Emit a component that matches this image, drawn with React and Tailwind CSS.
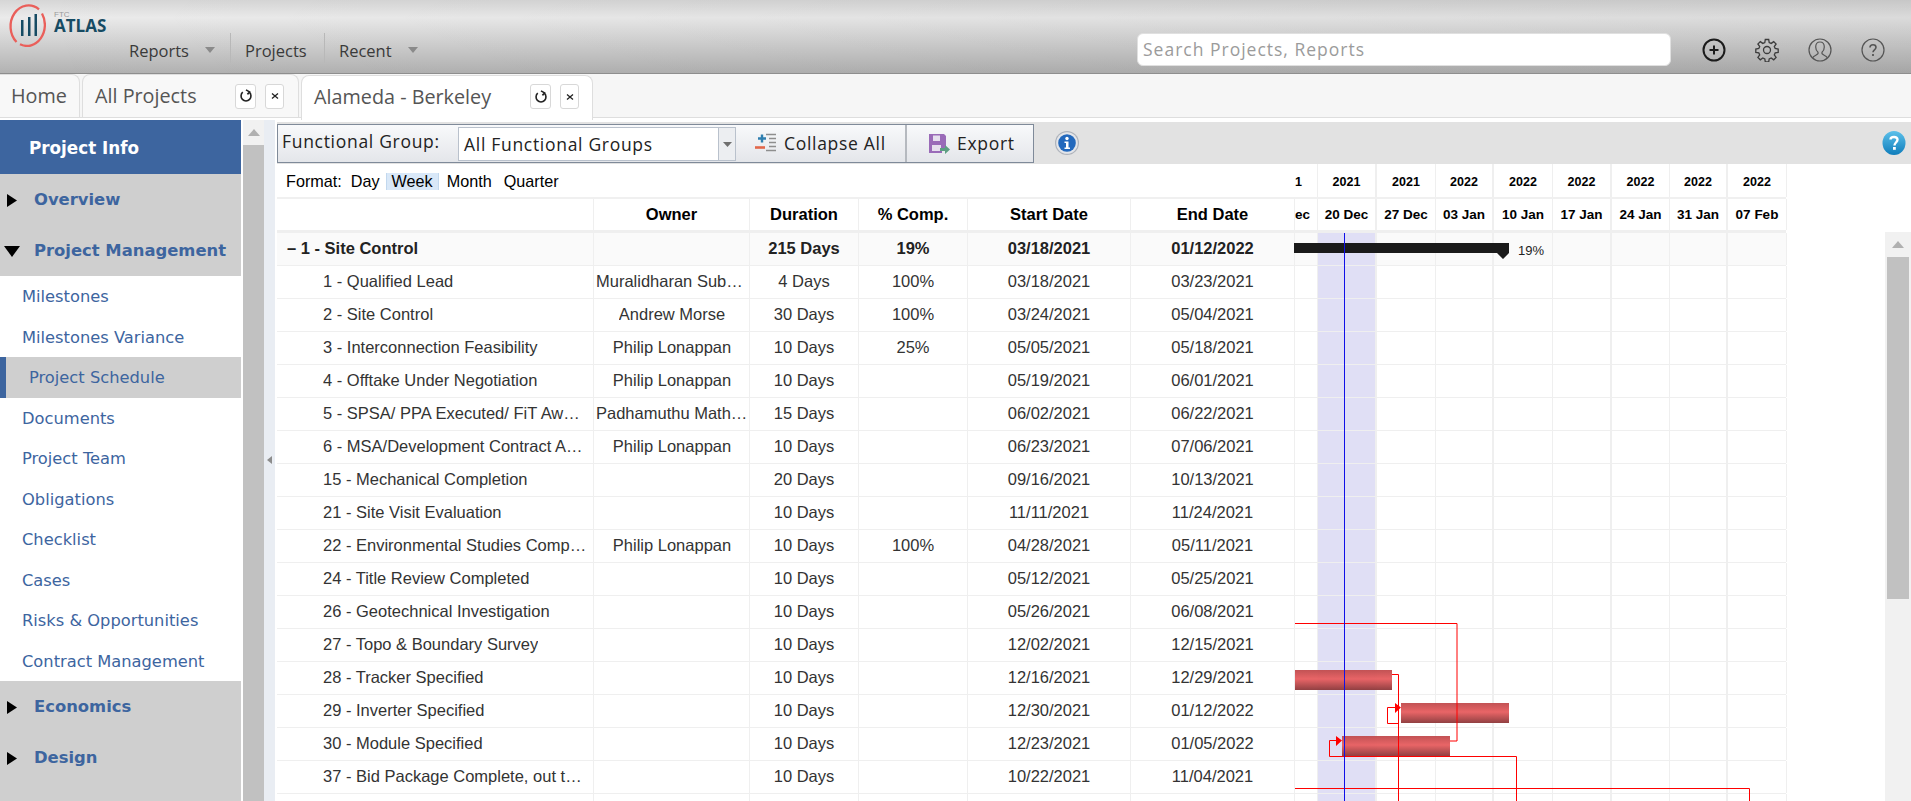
import React from 'react';

const SANS = "font-['Open_Sans','Noto_Sans',sans-serif]";

const links = ['Milestones', 'Milestones Variance', 'Project Schedule', 'Documents', 'Project Team', 'Obligations', 'Checklist', 'Cases', 'Risks & Opportunities', 'Contract Management'];

const rows = [
  ['1 - Qualified Lead', 'Muralidharan Subramanian', '4 Days', '100%', '03/18/2021', '03/23/2021'],
  ['2 - Site Control', 'Andrew Morse', '30 Days', '100%', '03/24/2021', '05/04/2021'],
  ['3 - Interconnection Feasibility', 'Philip Lonappan', '10 Days', '25%', '05/05/2021', '05/18/2021'],
  ['4 - Offtake Under Negotiation', 'Philip Lonappan', '10 Days', '', '05/19/2021', '06/01/2021'],
  ['5 - SPSA/ PPA Executed/ FiT Awarded', 'Padhamuthu Mathivanan', '15 Days', '', '06/02/2021', '06/22/2021'],
  ['6 - MSA/Development Contract Approved', 'Philip Lonappan', '10 Days', '', '06/23/2021', '07/06/2021'],
  ['15 - Mechanical Completion', '', '20 Days', '', '09/16/2021', '10/13/2021'],
  ['21 - Site Visit Evaluation', '', '10 Days', '', '11/11/2021', '11/24/2021'],
  ['22 - Environmental Studies Completed', 'Philip Lonappan', '10 Days', '100%', '04/28/2021', '05/11/2021'],
  ['24 - Title Review Completed', '', '10 Days', '', '05/12/2021', '05/25/2021'],
  ['26 - Geotechnical Investigation', '', '10 Days', '', '05/26/2021', '06/08/2021'],
  ['27 - Topo & Boundary Survey', '', '10 Days', '', '12/02/2021', '12/15/2021'],
  ['28 - Tracker Specified', '', '10 Days', '', '12/16/2021', '12/29/2021'],
  ['29 - Inverter Specified', '', '10 Days', '', '12/30/2021', '01/12/2022'],
  ['30 - Module Specified', '', '10 Days', '', '12/23/2021', '01/05/2022'],
  ['37 - Bid Package Complete, out to bid', '', '10 Days', '', '10/22/2021', '11/04/2021'],
  ['', '', '', '', '', ''],
];

const years = ['1', '2021', '2021', '2022', '2022', '2022', '2022', '2022', '2022'];
const weeks = ['ec', '20 Dec', '27 Dec', '03 Jan', '10 Jan', '17 Jan', '24 Jan', '31 Jan', '07 Feb'];
// thick separators every second week, the current week is shaded
const weekLines = ['border-r', 'border-r-2', 'border-r', 'border-r-2', 'border-r', 'border-r-2', 'border-r', 'border-r-2', 'border-r'];

const GRID = 'grid grid-cols-[317px_156px_109px_109px_163px_164px_23px_59px_59px_58px_59px_59px_58px_58px_59px] w-[1509px]';

const Caret = ({ className }) => (
  <svg width="10" height="6" viewBox="0 0 10 6" className={className}>
    <path d="M0 0h10L5 6z" fill="#8a8a8a" />
  </svg>
);

const Logo = () => (
  <div className="flex items-start w-[129px] h-[73px] pl-[8px] pt-[3px] shrink-0">
    <svg width="38" height="44" viewBox="0 0 38 44" className="shrink-0">
      <path d="M34 10.500A18 21 0 0 1 12 41.300" fill="none" stroke="#ea5f5a" strokeWidth="2.300" />
      <path d="M8.500 39A18 21 0 0 1 31 6.300" fill="none" stroke="#ea5f5a" strokeWidth="2.300" />
      <path d="M13 17v16h2.500V17zM20 14v19h2.500V14zM26.500 11v22H29V11z" fill="#164b63" />
    </svg>
    <div className="ml-[8px] mt-[8px] flex flex-col">
      <span className="font-['Liberation_Sans',sans-serif] text-[8px] leading-[7px] text-[#9a9a9a]">FTC</span>
      <span className="font-['Open_Sans',sans-serif] font-bold text-[17px] leading-[16px] text-[#164b63]">ATLAS</span>
    </div>
  </div>
);

const NavItem = ({ label, caret, className }) => (
  <div className={`flex items-center h-[30px] pt-[7px] text-[#3a3a3a] text-[16.500px] ${className}`}>
    <span>{label}</span>
    {caret && <Caret className="ml-[16px] mb-[3px]" />}
  </div>
);

const HeaderIcons = () => (
  <div className="flex items-center gap-[29px] ml-[31px]">
    <svg width="24" height="24" viewBox="0 0 24 24" fill="none" stroke="#1c1c1c" strokeWidth="2">
      <circle cx="12" cy="12" r="10.500" />
      <path d="M12 7.500v9M7.500 12h9" />
    </svg>
    <svg width="24" height="24" viewBox="0 0 24 24" fill="none" stroke="#3c3c3c" strokeWidth="1.300">
      <circle cx="12" cy="12" r="3.500" />
      <path d="M10.300 1.500h3.400l.5 3 2 .9 2.500-1.800 2.400 2.400-1.800 2.500.9 2 3 .5v3.400l-3 .5-.9 2 1.800 2.500-2.400 2.400-2.500-1.800-2 .9-.5 3h-3.400l-.5-3-2-.9-2.500 1.800-2.400-2.400 1.800-2.500-.9-2-3-.5v-3.400l3-.5.9-2-1.800-2.500 2.400-2.400 2.500 1.800 2-.9z" />
    </svg>
    <svg width="24" height="24" viewBox="0 0 24 24" fill="none" stroke="#555" strokeWidth="1.200">
      <circle cx="12" cy="12" r="11" />
      <path d="M4.500 20c1-2.500 4.500-2.800 5.500-4.300v-1.500c-1.500-1.200-2.300-3-2.300-5.200 0-3 1.800-5 4.300-5s4.300 2 4.300 5c0 2.200-.8 4-2.300 5.200v1.500c1 1.500 4.500 1.800 5.500 4.300" />
    </svg>
    <svg width="24" height="24" viewBox="0 0 24 24" fill="none" stroke="#555" strokeWidth="1.200">
      <circle cx="12" cy="12" r="11" />
      <path d="M9 9.500c0-1.800 1.300-2.800 3-2.800s3 1 3 2.600c0 2.500-3 2.500-3 5" strokeWidth="1.600" />
      <path d="M12 16v2" strokeWidth="1.800" />
    </svg>
  </div>
);

const Header = () => (
  <header className={`flex h-[74px] border-b border-[#8e8e8e] bg-[linear-gradient(90deg,rgba(0,0,0,0),rgba(0,0,0,0.07)),linear-gradient(180deg,#d6d6d6,#ebebeb_24%,#b2b2b2)] ${SANS}`}>
    <Logo />
    <nav className="flex self-start mt-[33px] h-[30px]">
      <NavItem label="Reports" caret className="w-[102px] border-r border-[#b8b8b8]" />
      <NavItem label="Projects" className="w-[94px] pl-[14px] border-r border-[#b8b8b8]" />
      <NavItem label="Recent" caret className="pl-[14px]" />
    </nav>
    <div className="flex items-center self-start ml-auto mr-[26px] mt-[33px]">
      <div className="w-[534px] h-[33px] rounded-[6px] bg-white border border-[#e0e0e0] flex items-center pl-[5px] text-[#9b9b9b] text-[17.500px] tracking-[1px]">
        Search Projects, Reports
      </div>
      <HeaderIcons />
    </div>
  </header>
);

const TabButton = ({ children, className }) => (
  <span className={`flex items-center justify-center h-[25px] rounded-[3px] border border-[#d8d8d8] bg-white text-[#222] ${className}`}>{children}</span>
);

const TabTools = () => (
  <div className="flex items-center gap-[9px] ml-auto">
    <TabButton className="w-[21px]">
      <svg width="14" height="14" viewBox="0 0 13 13" fill="none" stroke="#222" strokeWidth="1.500">
        <path d="M3.500 3A4.600 4.600 0 1 0 9.500 3" />
        <path d="M6.500 .8 9.800 2.700 7.800 5" />
      </svg>
    </TabButton>
    <TabButton className="w-[19px]">
      <svg width="8" height="8" viewBox="0 0 8 8" stroke="#222" strokeWidth="1.300"><path d="M1 1.500l6 5M7 1.500l-6 5" /></svg>
    </TabButton>
  </div>
);

const Tabs = () => (
  <div className={`flex items-end h-[44px] bg-[#f6f6f6] border-b border-[#dedede] text-[#555] text-[19.800px] ${SANS}`}>
    <div className="flex items-center w-[80px] h-[43px] pl-[11px] bg-[#f8f8f8] border border-l-0 border-b-0 border-[#dedede] rounded-tr-[8px]">Home</div>
    <div className="flex items-center w-[217px] h-[43px] ml-[2px] pl-[12px] pr-[14px] bg-[#f8f8f8] border border-b-0 border-[#dedede] rounded-t-[8px]">
      All Projects
      <TabTools />
    </div>
    <div className="relative flex items-center w-[292px] h-[45px] -mb-[3px] ml-[2px] pl-[12px] pr-[13px] pb-[3px] bg-white border border-b-0 border-[#dedede] rounded-t-[8px]">
      Alameda - Berkeley
      <TabTools />
    </div>
  </div>
);

const Tri = ({ down }) => (
  <span className="flex items-center justify-center w-[20px] shrink-0">
    {down ? (
      <svg width="16" height="11" viewBox="0 0 16 11"><path d="M0 0h16L8 11z" fill="#000" /></svg>
    ) : (
      <svg width="10" height="13" viewBox="0 0 10 13"><path d="M0 0l10 6.500L0 13z" fill="#000" /></svg>
    )}
  </span>
);

const SideHead = ({ label, down }) => (
  <div className="flex items-center h-[51px] pl-[2px] pt-[1px]">
    <Tri down={down} />
    <span className="ml-[12px] font-bold text-[16.400px] text-[#3d659f]">{label}</span>
  </div>
);

const Sidebar = () => (
  <aside className="w-[241px] shrink-0 bg-[#cfcfcf] font-['DejaVu_Sans',sans-serif]">
    <div className="flex items-center h-[54px] pl-[29px] pt-[4px] bg-[#3d659f] text-white font-bold text-[16.800px]">Project Info</div>
    <SideHead label="Overview" />
    <SideHead label="Project Management" down />
    <ul className="bg-white">
      {links.map((link) => (
        link === 'Project Schedule' ? (
          <li key={link} className="flex items-center h-[40.500px] pl-[23px] pt-[2px] bg-[#cfcfcf] border-l-[6px] border-[#3d659f] text-[16.300px] text-[#3d659f]">{link}</li>
        ) : (
          <li key={link} className="flex items-center h-[40.500px] pl-[22px] pt-[2px] text-[16.300px] text-[#3d659f]">{link}</li>
        )
      ))}
    </ul>
    <SideHead label="Economics" />
    <SideHead label="Design" />
  </aside>
);

const SideScroll = () => (
  <div className="flex flex-col w-[21px] ml-[2px] shrink-0 bg-[#f1f1f1]">
    <div className="flex items-center justify-center h-[25px]">
      <svg width="12" height="7" viewBox="0 0 12 7"><path d="M6 0l6 7H0z" fill="#b0b0b0" /></svg>
    </div>
    <div className="flex-1 bg-[#c1c1c1]" />
  </div>
);

const Splitter = () => (
  <div className="flex items-center justify-center w-[11px] shrink-0 bg-[#e9edf3] mr-[2px]">
    <svg width="5" height="8" viewBox="0 0 5 8" className="mt-[-1px]"><path d="M5 0v8L0 4z" fill="#8c8c8c" /></svg>
  </div>
);

const InfoIcon = () => (
  <svg width="24" height="24" viewBox="0 0 24 24">
    <circle cx="12" cy="12" r="12" fill="#aeb3bb" />
    <circle cx="12" cy="12" r="10.800" fill="#e4e6ea" />
    <circle cx="12" cy="12" r="8.800" fill="#2369bd" />
    <circle cx="12" cy="7.500" r="1.700" fill="#fff" />
    <path d="M9.500 10.500h4v6h1.500V18H9.500v-1.500H11V12H9.500z" fill="#fff" />
  </svg>
);

const HelpIcon = () => (
  <svg width="24" height="26" viewBox="0 0 24 26" className="mr-[5px]">
    <defs>
      <linearGradient id="helpFill" x1="0" y1="0" x2="0" y2="1">
        <stop offset="0" stopColor="#5cc0ea" />
        <stop offset="1" stopColor="#0f7dbb" />
      </linearGradient>
    </defs>
    <ellipse cx="12" cy="13" rx="11.500" ry="12" fill="url(#helpFill)" />
    <path d="M8.500 9.500c0-3 7-3.500 7 0 0 3-3 3-3 6" fill="none" stroke="#fff" strokeWidth="2.400" />
    <rect x="11" y="17" width="2.800" height="2.800" fill="#fff" />
  </svg>
);

const Toolbar = () => (
  <div className={`flex items-start h-[42px] mt-[2px] bg-[#e2e2e2] ${SANS}`}>
    <div className="flex items-start w-[757px] h-[39px] mt-[2px] border border-[#7f8a99] bg-[linear-gradient(180deg,#f8f9fb,#e4e6ea)] text-[#222] text-[17.500px] tracking-[0.7px]">
      <span className="flex items-center h-[33px] w-[180px] pl-[4px] shrink-0">Functional Group:</span>
      <div className="flex w-[278px] h-[34px] mt-[2px] border border-[#b9c1cc] bg-white shrink-0">
        <span className="flex items-center flex-1 pl-[5px]">All Functional Groups</span>
        <span className="flex items-center justify-center w-[17px] border-l border-[#b9c1cc] bg-[#eceef1]">
          <svg width="9" height="5" viewBox="0 0 9 5"><path d="M0 0h9L4.500 5z" fill="#6f6f6f" /></svg>
        </span>
      </div>
      <div className="flex items-center w-[171px] h-full pl-[18px] border-r-2 border-[#b5b9bf] shrink-0">
        <svg width="24" height="22" viewBox="0 0 24 22" className="shrink-0">
          <path d="M4 5.500h8M8 1.500v8" stroke="#2f7fb0" strokeWidth="2.400" />
          <path d="M1 14.500h10" stroke="#e2674a" strokeWidth="2.600" />
          <path d="M12 1.500h10M15 5.500h7M15 9.500h7M15 13.500h7M12 17.500h10" stroke="#8e8e8e" strokeWidth="1.300" />
        </svg>
        <span className="ml-[6px]">Collapse All</span>
      </div>
      <div className="flex items-center h-full pl-[21px]">
        <svg width="22" height="22" viewBox="0 0 22 22" className="shrink-0">
          <path d="M1 1h15l2 2v12h-4v5H1z" fill="#9a6bb8" />
          <rect x="5" y="2.500" width="7" height="5.500" fill="#e6e0ee" />
          <rect x="4" y="12" width="9" height="6" fill="#e6e0ee" />
          <path d="M12 15h5v-3l5 4.500-5 4.500v-3h-5z" fill="#5e9f83" />
        </svg>
        <span className="ml-[7px]">Export</span>
      </div>
    </div>
    <div className="ml-[21px] self-center"><InfoIcon /></div>
    <div className="ml-auto self-center"><HelpIcon /></div>
  </div>
);

const FormatBar = () => (
  <div className="col-span-6 flex items-center pl-[9px] pt-[1px] text-[16.200px] text-black">
    <span>Format:</span>
    <span className="ml-[9px]">Day</span>
    <span className="ml-[6px] px-[5px] h-[17px] leading-[17px] bg-[#d9e8f8] border-x border-[#c2d8ee]">Week</span>
    <span className="ml-[8px]">Month</span>
    <span className="ml-[12px]">Quarter</span>
  </div>
);

const cellLine = 'border-r border-[#efefef]';

const GanttCells = ({ shaded, labels, size }) => (
  <>
    {weekLines.map((line, i) => (
      <div
        key={i}
        className={`flex items-center overflow-hidden ${i === 0 && labels ? 'justify-start' : 'justify-center'} ${line} border-[#efefef] ${shaded && i === 1 ? 'bg-[#e0dff5]' : ''} ${labels ? `font-bold ${size}` : ''}`}
      >
        {labels ? labels[i] : ''}
      </div>
    ))}
  </>
);

const HeadRows = () => (
  <div className="font-['Liberation_Sans',sans-serif] text-black">
    <div className={`${GRID} h-[35px] border-b-2 border-[#f0f0f0]`}>
      <FormatBar />
      <GanttCells labels={years} size="text-[12.500px] pt-[3px]" />
    </div>
    <div className={`${GRID} h-[34px] border-b-[3px] border-[#efefef] font-bold text-[16.500px]`}>
      <div className={cellLine} />
      {['Owner', 'Duration', '% Comp.', 'Start Date', 'End Date'].map((h) => (
        <div key={h} className={`flex items-center justify-center ${cellLine}`}>{h}</div>
      ))}
      <GanttCells labels={weeks} size="text-[13.500px] pt-[1px]" />
    </div>
  </div>
);

const TaskRow = ({ row }) => (
  <div className={`${GRID} h-[33px] border-b border-[#efefef] text-[16.500px] text-[#333]`}>
    <div className={`flex items-center pl-[46px] pr-[6px] pb-[1px] min-w-0 ${cellLine}`}><span className="truncate">{row[0]}</span></div>
    <div className={`flex items-center justify-center pl-[2px] pr-[1px] pb-[1px] min-w-0 ${cellLine}`}><span className="truncate">{row[1]}</span></div>
    {row.slice(2).map((val, i) => (
      <div key={i} className={`flex items-center justify-center pb-[1px] ${cellLine}`}>{val}</div>
    ))}
    <GanttCells shaded />
  </div>
);

const SummaryRow = () => (
  <div className={`${GRID} h-[33px] border-b border-[#efefef] bg-[#fafafa] text-[16.500px] font-bold text-[#222]`}>
    <div className={`flex items-center pl-[10px] pb-[1px] ${cellLine}`}>– 1 - Site Control</div>
    <div className={cellLine} />
    {['215 Days', '19%', '03/18/2021', '01/12/2022'].map((val) => (
      <div key={val} className={`flex items-center justify-center pb-[1px] ${cellLine}`}>{val}</div>
    ))}
    <GanttCells shaded />
  </div>
);

// bars, links and today marker, coordinates measured from the first gantt column
const GanttOverlay = () => (
  <svg className="absolute left-[1017px] top-0" width="500" height="580" viewBox="0 0 500 580">
    <defs>
      <linearGradient id="barFill" x1="0" y1="0" x2="0" y2="1">
        <stop offset="0" stopColor="#c04d4f" />
        <stop offset="0.45" stopColor="#e86062" />
        <stop offset="1" stopColor="#8e3a3c" />
      </linearGradient>
    </defs>
    <path d="M0 10h215v10l-6 6-6-6H0z" fill="#1a1a1a" />
    <g fill="url(#barFill)" fillOpacity="0.97">
      <rect x="1" y="437" width="97" height="20" />
      <rect x="107" y="470" width="108" height="20" />
      <rect x="48" y="503" width="108" height="20" />
    </g>
    <g fill="none" stroke="#ff0000" strokeWidth="1">
      <path d="M1 390.500h162v117.500h-7" />
      <path d="M98 441.500h6.500V580" />
      <path d="M104 474.500H93.500v16h11" />
      <path d="M46 507.500H35.500v16h187V580" />
      <path d="M1 555.500h454.500V580" />
    </g>
    <path d="M101 470l6 4.500-6 5.500zM42 503l6 4.500-6 5.500z" fill="#ff0000" />
    <path d="M50.500 0v580" stroke="#1010e8" strokeWidth="1" />
  </svg>
);

const Chart = () => (
  <div className="relative flex-1 overflow-hidden">
    <div className="font-['Liberation_Sans',sans-serif]">
      <SummaryRow />
      {rows.map((row, i) => <TaskRow key={i} row={row} />)}
    </div>
    <GanttOverlay />
    <span className="absolute left-[1241px] top-[8px] text-[13px] text-[#222] font-['Liberation_Sans',sans-serif]">19%</span>
  </div>
);

const MainScroll = () => (
  <div className="absolute right-0 top-[112px] bottom-0 w-[26px] bg-[#f1f1f1] px-[2px]">
    <div className="flex items-center justify-center h-[25px]">
      <svg width="12" height="7" viewBox="0 0 12 7"><path d="M6 0l6 7H0z" fill="#b0b0b0" /></svg>
    </div>
    <div className="h-[342px] bg-[#c1c1c1]" />
  </div>
);

const App = () => (
  <div className="h-screen w-full overflow-hidden bg-white flex flex-col">
    <Header />
    <Tabs />
    <div className="flex flex-1 min-h-0 pt-[2px]">
      <Sidebar />
      <SideScroll />
      <Splitter />
      <main className="relative flex flex-col flex-1 min-w-0">
        <Toolbar />
        <HeadRows />
        <Chart />
        <MainScroll />
      </main>
    </div>
  </div>
);

export default App;
